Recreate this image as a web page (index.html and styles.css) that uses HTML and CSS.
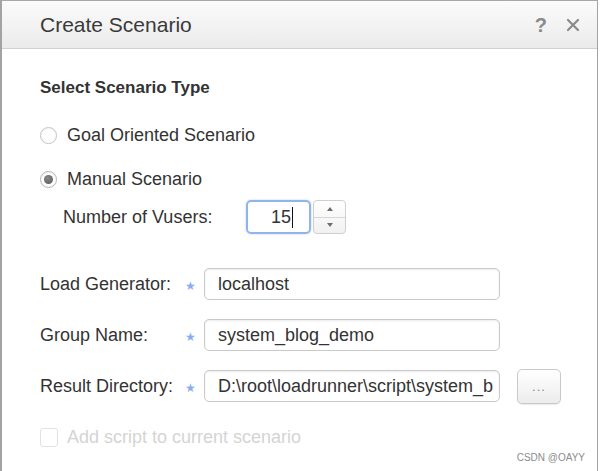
FILE: index.html
```html
<!DOCTYPE html>
<html>
<head>
<meta charset="utf-8">
<link rel="stylesheet" href="styles.css">
</head>
<body>
<div class="dialog">
  <div class="header">
    <div class="title">Create Scenario</div>
    <div class="tools">
      <span class="tool help">?</span>
      <svg class="close" width="14" height="14" viewBox="0 0 14 14">
        <path d="M2 2 L12 12 M12 2 L2 12" stroke="#8a8a8a" stroke-width="2.2" stroke-linecap="round" fill="none"/>
      </svg>
    </div>
  </div>
  <div class="content">
    <div class="heading">Select Scenario Type</div>
    <div class="radio-row">
      <span class="radio"></span>
      <span class="label">Goal Oriented Scenario</span>
    </div>
    <div class="radio-row second">
      <span class="radio checked"></span>
      <span class="label">Manual Scenario</span>
    </div>
    <div class="vusers-row">
      <span class="vusers-label">Number of Vusers:</span>
      <div class="spin-input">
        <span class="spin-value">15</span><span class="caret"></span>
      </div>
      <div class="spinner">
        <span class="spin-btn up"></span>
        <span class="spin-btn down"></span>
      </div>
    </div>
    <div class="form-grid">
      <span class="flabel">Load Generator:</span>
      <span class="star">&#9733;</span>
      <div class="field">localhost</div>
      <span></span>

      <span class="flabel">Group Name:</span>
      <span class="star">&#9733;</span>
      <div class="field">system_blog_demo</div>
      <span></span>

      <span class="flabel">Result Directory:</span>
      <span class="star">&#9733;</span>
      <div class="field">D:\root\loadrunner\script\system_b</div>
      <div class="browse">...</div>
    </div>
    <div class="check-row">
      <span class="checkbox"></span>
      <span class="check-label">Add script to current scenario</span>
    </div>
  </div>
  <div class="watermark">CSDN @OAYY</div>
</div>
</body>
</html>
```

FILE: styles.css
```css
html, body {
  margin: 0;
  padding: 0;
  background: #ffffff;
}

body {
  font-family: "Liberation Sans", Arial, sans-serif;
  color: #333333;
  width: 600px;
  height: 471px;
  overflow: hidden;
}

.dialog {
  position: relative;
  box-sizing: border-box;
  width: 598px;
  height: 471px;
  border-left: 2px solid #a3a3a3;
  border-top: 1px solid #a8a8a8;
  border-right: 1px solid #a3a3a3;
  background: #ffffff;
}

.header {
  height: 47px;
  display: flex;
  align-items: center;
  justify-content: space-between;
  padding-left: 38px;
  padding-right: 17px;
  background: linear-gradient(#fbfbfb, #ebebeb);
  border-bottom: 1px solid #d0d0d0;
}

.title {
  font-size: 21px;
  color: #3a3a3a;
  padding-top: 1px;
}

.tools {
  display: flex;
  align-items: center;
  gap: 19px;
}

.tool {
  color: #8a8a8a;
  font-weight: bold;
}

.help {
  font-size: 20px;
  line-height: 22px;
}

.close {
  display: block;
  margin-top: 1px;
}

.content {
  padding: 29px 0 0 38px;
}

.heading {
  font-size: 17px;
  font-weight: bold;
  line-height: 20px;
  color: #333;
}

.radio-row {
  display: flex;
  align-items: center;
  height: 24px;
  margin-top: 25px;
  font-size: 18px;
}

.radio-row.second {
  margin-top: 20px;
}

.radio {
  box-sizing: border-box;
  width: 17px;
  height: 17px;
  border-radius: 50%;
  border: 1px solid #c4c4c4;
  background: radial-gradient(circle at 50% 60%, #ffffff 55%, #ececec 100%);
  box-shadow: 0 0 1px rgba(0,0,0,0.08);
  margin-right: 10px;
  display: flex;
  align-items: center;
  justify-content: center;
}

.radio.checked {
  border-color: #b5b5b5;
}

.radio.checked::after {
  content: "";
  width: 9px;
  height: 9px;
  border-radius: 50%;
  background: radial-gradient(circle at 40% 35%, #8a8a8a, #555555);
}

.vusers-row {
  display: flex;
  align-items: center;
  margin-top: 9px;
  padding-left: 23px;
  height: 34px;
}

.vusers-label {
  font-size: 18px;
  width: 183px;
}

.spin-input {
  box-sizing: border-box;
  width: 65px;
  height: 34px;
  border: 2px solid #8fb5ec;
  border-radius: 5px;
  display: flex;
  align-items: center;
  justify-content: flex-end;
  padding-right: 16px;
  font-size: 18px;
  box-shadow: 0 0 2px rgba(120,160,230,0.5);
}

.caret {
  width: 1px;
  height: 21px;
  background: #111;
  margin-left: 1px;
}

.spinner {
  box-sizing: border-box;
  width: 33px;
  height: 34px;
  margin-left: 2px;
  border: 1px solid #cfcfcf;
  border-radius: 4px;
  display: flex;
  flex-direction: column;
  background: linear-gradient(#ffffff, #f1f1f1);
}

.spin-btn {
  flex: 1;
  display: flex;
  align-items: center;
  justify-content: center;
}

.spin-btn.up {
  border-bottom: 1px solid #d6d6d6;
}

.spin-btn.up::after {
  content: "";
  border-left: 3px solid transparent;
  border-right: 3px solid transparent;
  border-bottom: 4px solid #6d6d6d;
}

.spin-btn.down::after {
  content: "";
  border-left: 3px solid transparent;
  border-right: 3px solid transparent;
  border-top: 4px solid #6d6d6d;
}

.form-grid {
  display: grid;
  grid-template-columns: 142px 22px 296px 61px;
  grid-auto-rows: 32px;
  row-gap: 19px;
  align-items: center;
  margin-top: 34px;
}

.flabel {
  font-size: 18px;
}

.star {
  color: #86aef0;
  font-size: 12px;
  padding-left: 3px;
  padding-top: 4px;
  font-family: "DejaVu Sans", sans-serif;
}

.field {
  box-sizing: border-box;
  height: 32px;
  border: 1px solid #c9c9c9;
  border-radius: 5px;
  box-shadow: inset 0 1px 2px rgba(0,0,0,0.08);
  font-size: 18px;
  line-height: 30px;
  padding: 0 4px 0 13px;
  white-space: nowrap;
  overflow: hidden;
}

.browse {
  box-sizing: border-box;
  justify-self: end;
  width: 44px;
  height: 35px;
  border: 1px solid #c9c9c9;
  border-radius: 5px;
  background: linear-gradient(#ffffff, #ececec);
  box-shadow: 0 1px 1px rgba(0,0,0,0.08);
  color: #888;
  font-size: 13px;
  display: flex;
  align-items: flex-end;
  justify-content: center;
  padding-bottom: 9px;
  letter-spacing: 1px;
}

.check-row {
  display: flex;
  align-items: center;
  margin-top: 25px;
  height: 20px;
}

.checkbox {
  box-sizing: border-box;
  width: 18px;
  height: 19px;
  border: 1px solid #e2e2e2;
  border-radius: 3px;
  margin-right: 9px;
}

.check-label {
  font-size: 18px;
  color: #d4d4d4;
}

.watermark {
  position: absolute;
  right: 12px;
  bottom: 8px;
  font-size: 10px;
  color: #8c8c8c;
}
```
